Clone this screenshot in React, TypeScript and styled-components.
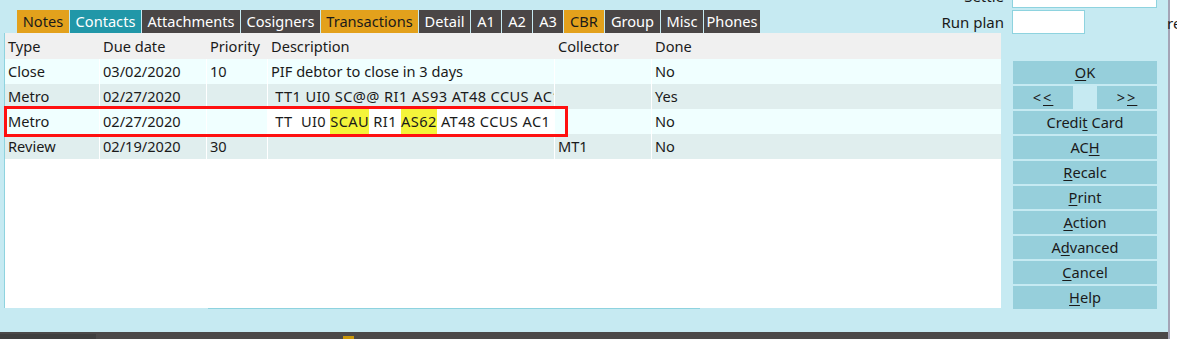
import React from "react";
import styled, { createGlobalStyle } from "styled-components";

type Tone = "orange" | "teal" | "dark";

const tabs: { label: string; width: number; tone: Tone }[] = [
  { label: "Notes", width: 52, tone: "orange" },
  { label: "Contacts", width: 71, tone: "teal" },
  { label: "Attachments", width: 98, tone: "dark" },
  { label: "Cosigners", width: 79, tone: "dark" },
  { label: "Transactions", width: 97, tone: "orange" },
  { label: "Detail", width: 51, tone: "dark" },
  { label: "A1", width: 30, tone: "dark" },
  { label: "A2", width: 30, tone: "dark" },
  { label: "A3", width: 30, tone: "dark" },
  { label: "CBR", width: 40, tone: "orange" },
  { label: "Group", width: 55, tone: "dark" },
  { label: "Misc", width: 42, tone: "dark" },
  { label: "Phones", width: 56, tone: "dark" },
];

const toneColors: Record<Tone, { bg: string; fg: string }> = {
  orange: { bg: "#e3a11c", fg: "#1a1a1a" },
  teal: { bg: "#2197a8", fg: "#ffffff" },
  dark: { bg: "#4a4646", fg: "#ffffff" },
};

const headers = ["Type", "Due date", "Priority", "Description", "Collector", "Done"];

const GlobalStyle = createGlobalStyle`
  html, body {
    margin: 0;
    padding: 0;
    background: #ffffff;
  }
  body {
    font-family: "Noto Sans", "Open Sans", sans-serif;
    color: #1a1a1a;
  }
`;

const App = () => {
  return (
    <Page>
      <GlobalStyle />
      <WindowColumn>
        <Window>
          <TopRow>
            <Tabs>
              {tabs.map((tab) => (
                <Tab key={tab.label} $tone={tab.tone} $width={tab.width}>
                  {tab.label}
                </Tab>
              ))}
            </Tabs>
            <Fields>
              <FieldLabel>Settle</FieldLabel>
              <FieldInput $width={145} />
              <FieldLabel>Run plan</FieldLabel>
              <FieldInput $width={73} />
            </Fields>
          </TopRow>
          <Body>
            <GridWrap>
              <Grid>
                <HeaderRow>
                  {headers.map((h) => (
                    <HeaderCell key={h}>{h}</HeaderCell>
                  ))}
                </HeaderRow>
                <Row>
                  <Cell $alt={false}>Close</Cell>
                  <Cell $alt={false}>03/02/2020</Cell>
                  <Cell $alt={false}>10</Cell>
                  <Cell $alt={false}>PIF debtor to close in 3 days</Cell>
                  <Cell $alt={false} />
                  <Cell $alt={false}>No</Cell>
                </Row>
                <Row>
                  <Cell $alt>Metro</Cell>
                  <Cell $alt>02/27/2020</Cell>
                  <Cell $alt />
                  <Cell $alt $code>
                    {" TT1 UI0 SC@@ RI1 AS93 AT48 CCUS AC1 UT1"}
                  </Cell>
                  <Cell $alt />
                  <Cell $alt>Yes</Cell>
                </Row>
                <Row>
                  <Cell $alt={false}>Metro</Cell>
                  <Cell $alt={false}>02/27/2020</Cell>
                  <Cell $alt={false} />
                  <Cell $alt={false} $white $code>
                    {" TT  UI0 "}
                    <Mark>SCAU</Mark>
                    {" RI1 "}
                    <Mark>AS62</Mark>
                    {" AT48 CCUS AC1 "}
                    <Mark>UT</Mark>
                  </Cell>
                  <Cell $alt={false} />
                  <Cell $alt={false}>No</Cell>
                  <Outline />
                </Row>
                <Row>
                  <Cell $alt>Review</Cell>
                  <Cell $alt>02/19/2020</Cell>
                  <Cell $alt>30</Cell>
                  <Cell $alt />
                  <Cell $alt>MT1</Cell>
                  <Cell $alt>No</Cell>
                </Row>
              </Grid>
              <ScrollLine />
            </GridWrap>
            <Buttons>
              <Button>
                <u>O</u>K
              </Button>
              <NavRow>
                <NavButton>
                  &lt;<u>&lt;</u>
                </NavButton>
                <NavButton>
                  &gt;<u>&gt;</u>
                </NavButton>
              </NavRow>
              <Button>
                Credi<u>t</u> Card
              </Button>
              <Button>
                AC<u>H</u>
              </Button>
              <Button>
                <u>R</u>ecalc
              </Button>
              <Button>
                <u>P</u>rint
              </Button>
              <Button>
                <u>A</u>ction
              </Button>
              <Button>
                A<u>d</u>vanced
              </Button>
              <Button>
                <u>C</u>ancel
              </Button>
              <Button>
                <u>H</u>elp
              </Button>
            </Buttons>
          </Body>
        </Window>
        <TaskBar>
          <TaskDark />
          <TaskMark />
        </TaskBar>
      </WindowColumn>
      <Outside>
        <Spill>re</Spill>
      </Outside>
    </Page>
  );
};

export default App;

const Page = styled.div`
  display: flex;
  width: 1177px;
  height: 339px;
  overflow: hidden;
`;

const WindowColumn = styled.div`
  display: flex;
  flex-direction: column;
  width: 1168px;
  flex-shrink: 0;
`;

const Window = styled.div`
  height: 332px;
  background: #c6eaf2;
  overflow: hidden;
  display: flex;
  flex-direction: column;
`;

const TopRow = styled.div`
  display: flex;
  align-items: flex-start;
  height: 33px;
  flex-shrink: 0;
`;

const Tabs = styled.div`
  display: flex;
  gap: 1px;
  margin: 10px 0 0 17px;
`;

const Tab = styled.div<{ $tone: Tone; $width: number }>`
  width: ${(p) => p.$width}px;
  height: 23px;
  line-height: 23px;
  text-align: center;
  font-size: 14.6px;
  white-space: nowrap;
  overflow: hidden;
  background: ${(p) => toneColors[p.$tone].bg};
  color: ${(p) => toneColors[p.$tone].fg};
`;

const Fields = styled.div`
  display: grid;
  grid-template-columns: auto auto;
  column-gap: 8px;
  row-gap: 2px;
  align-items: center;
  margin: -16px 11px 0 auto;
`;

const FieldLabel = styled.div`
  text-align: right;
  font-size: 15px;
  color: #1a1a1a;
`;

const FieldInput = styled.div<{ $width: number }>`
  width: ${(p) => p.$width}px;
  height: 24px;
  box-sizing: border-box;
  background: #ffffff;
  border: 1px solid #8ed3df;
`;

const Body = styled.div`
  display: flex;
  align-items: flex-start;
`;

const GridWrap = styled.div`
  display: flex;
  flex-direction: column;
  margin-left: 4px;
  width: 997px;
`;

const Grid = styled.div`
  height: 275px;
  box-sizing: border-box;
  border-left: 1px solid #8ed3df;
  background: #ffffff;
  font-size: 14.6px;
`;

const columns = "94px 106px 60px 286px 96px 1fr";

const HeaderRow = styled.div`
  display: grid;
  grid-template-columns: ${columns};
  column-gap: 1px;
  height: 26px;
  background: #f0f0f0;
`;

const HeaderCell = styled.div`
  padding-left: 3px;
  line-height: 26px;
  white-space: nowrap;
`;

const Row = styled.div`
  position: relative;
  display: grid;
  grid-template-columns: ${columns};
  column-gap: 1px;
  height: 25px;
  background: #ffffff;
`;

const Cell = styled.div<{ $alt: boolean; $white?: boolean; $code?: boolean }>`
  padding-left: 3px;
  line-height: 25px;
  white-space: pre;
  overflow: hidden;
  letter-spacing: ${(p) => (p.$code ? "0.4px" : "normal")};
  background: ${(p) => (p.$white ? "#ffffff" : p.$alt ? "#e0eeee" : "#f0ffff")};
`;

const Mark = styled.span`
  display: inline-block;
  background: #f4f43a;
  line-height: 25px;
`;

const Outline = styled.div`
  position: absolute;
  z-index: 2;
  left: -1px;
  top: -3px;
  width: 564px;
  height: 31px;
  box-sizing: border-box;
  border: 3px solid #ff1010;
  pointer-events: none;
`;

const ScrollLine = styled.div`
  margin-left: 204px;
  width: 492px;
  height: 1px;
  background: #8ed3df;
`;

const Buttons = styled.div`
  display: flex;
  flex-direction: column;
  gap: 2px;
  width: 144px;
  margin-left: 12px;
  padding-top: 28px;
`;

const Button = styled.div`
  height: 23px;
  line-height: 23px;
  text-align: center;
  font-size: 14.6px;
  color: #1a1a1a;
  background: #96cfdb;

  u {
    text-underline-offset: 2px;
  }
`;

const NavRow = styled.div`
  display: flex;
  justify-content: space-between;
`;

const NavButton = styled(Button)`
  width: 60px;
  letter-spacing: 2px;
`;

const TaskBar = styled.div`
  display: flex;
  align-items: flex-end;
  height: 7px;
  background: #4b4949;
`;

const TaskDark = styled.div`
  width: 96px;
  height: 5px;
  background: #3f3f3f;
`;

const TaskMark = styled.div`
  width: 11px;
  height: 3px;
  margin-left: 247px;
  background: #c9970b;
`;

const Outside = styled.div`
  flex: 1;
  background: #ffffff;
  border-left: 2px solid #a4a4b6;
  padding-top: 13px;
`;

const Spill = styled.div`
  margin-left: -3px;
  font-size: 15px;
  color: #1a1a1a;
  white-space: nowrap;
`;
